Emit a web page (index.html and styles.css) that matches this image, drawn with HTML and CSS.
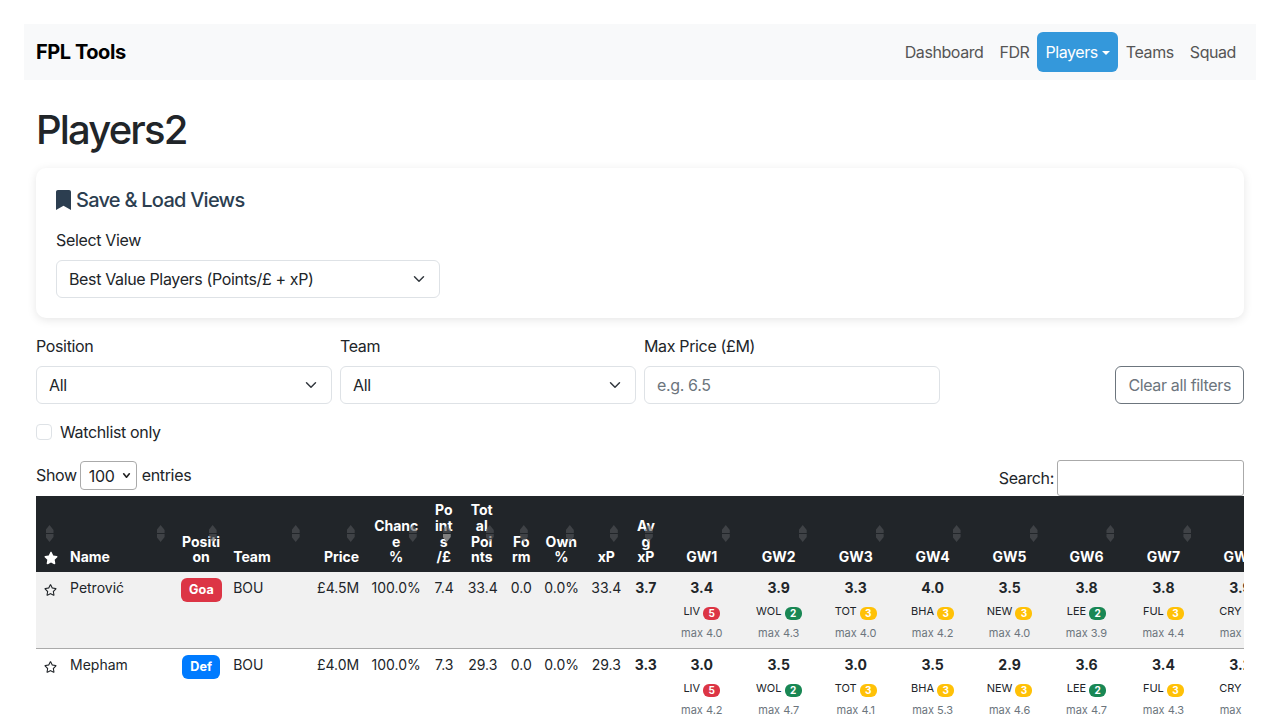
FILE: index.html
```html
<!DOCTYPE html>
<html lang="en">
<head>
    <meta charset="UTF-8">
    <meta name="viewport" content="width=device-width, initial-scale=1.0">
    <title>Players2</title>
    <link rel="stylesheet" href="styles.css">
</head>
<body>
    <nav class="navbar">
        <a class="brand" href="#">FPL Tools</a>
        <ul class="nav-links">
            <li><a href="#">Dashboard</a></li>
            <li><a href="#">FDR</a></li>
            <li><a class="active" href="#">Players<span class="caret"></span></a></li>
            <li><a href="#">Teams</a></li>
            <li><a href="#">Squad</a></li>
        </ul>
    </nav>

    <main class="container">
        <h1>Players2</h1>

        <section class="card">
            <h2>
                <svg class="bookmark" viewBox="0 0 384 512"><path d="M0 512V48C0 21.49 21.49 0 48 0h288c26.51 0 48 21.49 48 48v464L192 400 0 512z"/></svg>
                Save &amp; Load Views
            </h2>
            <label class="field-label">Select View</label>
            <select class="form-select view-select">
                <option>Best Value Players (Points/£ + xP)</option>
            </select>
        </section>

        <div class="filters">
            <div class="filter">
                <label class="field-label">Position</label>
                <select class="form-select"><option>All</option></select>
            </div>
            <div class="filter">
                <label class="field-label">Team</label>
                <select class="form-select"><option>All</option></select>
            </div>
            <div class="filter">
                <label class="field-label">Max Price (£M)</label>
                <input class="form-input" type="text" placeholder="e.g. 6.5">
            </div>
            <button class="clear-btn">Clear all filters</button>
        </div>

        <label class="watchlist"><input type="checkbox"> Watchlist only</label>

        <div class="table-controls">
            <label class="length">Show <select class="length-select"><option>100</option></select> entries</label>
            <label class="search">Search: <input type="search"></label>
        </div>

        <div class="table-wrap">
            <table class="players">
                <colgroup>
                    <col class="c-star"><col class="c-name"><col class="c-pos"><col class="c-team"><col class="c-price">
                    <col class="c-chance"><col class="c-ppp"><col class="c-total"><col class="c-form"><col class="c-own">
                    <col class="c-xp"><col class="c-avg">
                    <col class="c-gw"><col class="c-gw"><col class="c-gw"><col class="c-gw">
                    <col class="c-gw"><col class="c-gw"><col class="c-gw"><col class="c-gw">
                </colgroup>
                <thead>
                    <tr>
                        <th><svg class="star" viewBox="0 0 576 512"><path fill="#fff" d="M259.3 17.8L194 150.2 47.9 171.5c-26.2 3.8-36.7 36.1-17.7 54.6l105.7 103-25 145.5c-4.5 26.3 23.2 46 46.4 33.7L288 439.6l130.7 68.7c23.2 12.2 50.9-7.4 46.4-33.7l-25-145.5 105.7-103c19-18.5 8.5-50.8-17.7-54.6L382 150.2 316.7 17.8c-11.7-23.6-45.6-23.9-57.4 0z"/></svg></th>
                        <th class="left">Name</th>
                        <th>Position</th>
                        <th class="left">Team</th>
                        <th class="right">Price</th>
                        <th>Chance<br>%</th>
                        <th class="sorted tight-points">Points<br>/£</th>
                        <th class="tight-total">Total<br>Points</th>
                        <th>Form</th>
                        <th>Own<br>%</th>
                        <th>xP</th>
                        <th>Avg<br>xP</th>
                        <th>GW1</th><th>GW2</th><th>GW3</th><th>GW4</th>
                        <th>GW5</th><th>GW6</th><th>GW7</th><th>GW8</th>
                    </tr>
                </thead>
                <tbody>
                    <tr class="odd">
                        <td><svg class="star" viewBox="0 0 576 512"><path d="M528.1 171.5L382 150.2 316.7 17.8c-11.7-23.6-45.6-23.9-57.4 0L194 150.2 47.9 171.5c-26.2 3.8-36.7 36.1-17.7 54.6l105.7 103-25 145.5c-4.5 26.3 23.2 46 46.4 33.7L288 439.6l130.7 68.7c23.2 12.2 50.9-7.4 46.4-33.7l-25-145.5 105.7-103c19-18.5 8.5-50.8-17.7-54.6zM388.6 312.3l23.7 138.4L288 385.4l-124.3 65.3 23.7-138.4-100.6-98 139-20.2 62.2-126 62.2 126 139 20.2-100.6 98z"/></svg></td>
                        <td class="left">Petrović</td>
                        <td><span class="pos pos-goa">Goa</span></td>
                        <td class="left">BOU</td>
                        <td class="right">£4.5M</td>
                        <td>100.0%</td><td>7.4</td><td>33.4</td><td>0.0</td><td>0.0%</td><td>33.4</td><td><b>3.7</b></td>
                        <td><div class="gw-xp">3.4</div><div class="gw-fix">LIV <span class="fdr fdr-5">5</span></div><div class="gw-max">max 4.0</div></td>
                        <td><div class="gw-xp">3.9</div><div class="gw-fix">WOL <span class="fdr fdr-2">2</span></div><div class="gw-max">max 4.3</div></td>
                        <td><div class="gw-xp">3.3</div><div class="gw-fix">TOT <span class="fdr fdr-3">3</span></div><div class="gw-max">max 4.0</div></td>
                        <td><div class="gw-xp">4.0</div><div class="gw-fix">BHA <span class="fdr fdr-3">3</span></div><div class="gw-max">max 4.2</div></td>
                        <td><div class="gw-xp">3.5</div><div class="gw-fix">NEW <span class="fdr fdr-3">3</span></div><div class="gw-max">max 4.0</div></td>
                        <td><div class="gw-xp">3.8</div><div class="gw-fix">LEE <span class="fdr fdr-2">2</span></div><div class="gw-max">max 3.9</div></td>
                        <td><div class="gw-xp">3.8</div><div class="gw-fix">FUL <span class="fdr fdr-3">3</span></div><div class="gw-max">max 4.4</div></td>
                        <td><div class="gw-xp">3.9</div><div class="gw-fix">CRY <span class="fdr fdr-3">3</span></div><div class="gw-max">max 4.5</div></td>
                    </tr>
                    <tr>
                        <td><svg class="star" viewBox="0 0 576 512"><path d="M528.1 171.5L382 150.2 316.7 17.8c-11.7-23.6-45.6-23.9-57.4 0L194 150.2 47.9 171.5c-26.2 3.8-36.7 36.1-17.7 54.6l105.7 103-25 145.5c-4.5 26.3 23.2 46 46.4 33.7L288 439.6l130.7 68.7c23.2 12.2 50.9-7.4 46.4-33.7l-25-145.5 105.7-103c19-18.5 8.5-50.8-17.7-54.6zM388.6 312.3l23.7 138.4L288 385.4l-124.3 65.3 23.7-138.4-100.6-98 139-20.2 62.2-126 62.2 126 139 20.2-100.6 98z"/></svg></td>
                        <td class="left">Mepham</td>
                        <td><span class="pos pos-def">Def</span></td>
                        <td class="left">BOU</td>
                        <td class="right">£4.0M</td>
                        <td>100.0%</td><td>7.3</td><td>29.3</td><td>0.0</td><td>0.0%</td><td>29.3</td><td><b>3.3</b></td>
                        <td><div class="gw-xp">3.0</div><div class="gw-fix">LIV <span class="fdr fdr-5">5</span></div><div class="gw-max">max 4.2</div></td>
                        <td><div class="gw-xp">3.5</div><div class="gw-fix">WOL <span class="fdr fdr-2">2</span></div><div class="gw-max">max 4.7</div></td>
                        <td><div class="gw-xp">3.0</div><div class="gw-fix">TOT <span class="fdr fdr-3">3</span></div><div class="gw-max">max 4.1</div></td>
                        <td><div class="gw-xp">3.5</div><div class="gw-fix">BHA <span class="fdr fdr-3">3</span></div><div class="gw-max">max 5.3</div></td>
                        <td><div class="gw-xp">2.9</div><div class="gw-fix">NEW <span class="fdr fdr-3">3</span></div><div class="gw-max">max 4.6</div></td>
                        <td><div class="gw-xp">3.6</div><div class="gw-fix">LEE <span class="fdr fdr-2">2</span></div><div class="gw-max">max 4.7</div></td>
                        <td><div class="gw-xp">3.4</div><div class="gw-fix">FUL <span class="fdr fdr-3">3</span></div><div class="gw-max">max 4.3</div></td>
                        <td><div class="gw-xp">3.2</div><div class="gw-fix">CRY <span class="fdr fdr-3">3</span></div><div class="gw-max">max 4.0</div></td>
                    </tr>
                </tbody>
            </table>
        </div>
    </main>
</body>
</html>
```

FILE: styles.css
```css
* {
    box-sizing: border-box;
}

html, body {
    height: 100%;
    overflow: hidden;
}

body {
    margin: 0;
    padding: 24px 24px 0;
    background-color: #fff;
    color: #212529;
    font-family: Inter, "Liberation Sans", sans-serif;
    font-size: 16px;
    line-height: 24px;
    letter-spacing: -0.35px;
}

select, input, button {
    letter-spacing: inherit;
}

.navbar {
    display: flex;
    justify-content: space-between;
    align-items: center;
    height: 56px;
    padding: 0 12px;
    background-color: #f8f9fa;
}

.brand {
    color: #000;
    font-size: 20px;
    font-weight: 700;
    letter-spacing: -0.45px;
    text-decoration: none;
}

.nav-links {
    display: flex;
    list-style: none;
    margin: 0;
    padding: 0;
    letter-spacing: -0.42px;
}

.nav-links a {
    display: block;
    padding: 8px;
    border-radius: 6px;
    color: #555;
    text-decoration: none;
}

.nav-links a.active {
    background-color: #3498db;
    color: #fff;
}

.caret {
    display: inline-block;
    margin-left: 4px;
    vertical-align: 3px;
    border-top: 4.8px solid #fff;
    border-left: 4.8px solid transparent;
    border-right: 4.8px solid transparent;
}

.container {
    padding: 0 12px;
}

h1 {
    margin: 24px 0 12px;
    font-size: 40px;
    font-weight: 500;
    letter-spacing: -1.85px;
    line-height: 52px;
}

.card {
    height: 150px;
    padding: 20px;
    border-radius: 10px;
    box-shadow: 0 2px 10px rgba(0, 0, 0, 0.1);
}

.card h2 {
    display: flex;
    align-items: center;
    gap: 5px;
    margin: 0 0 16px;
    color: #2c3e50;
    font-size: 20px;
    font-weight: 500;
    letter-spacing: -0.75px;
    line-height: 24px;
}

.bookmark {
    width: 15px;
    height: 20px;
    fill: #2c3e50;
}

.field-label {
    display: block;
    margin-bottom: 8px;
}

.form-select, .form-input {
    display: block;
    width: 100%;
    height: 38px;
    padding: 6px 12px;
    background-color: #fff;
    border: 1px solid #dee2e6;
    border-radius: 6px;
    color: #212529;
    font-family: inherit;
    font-size: 16px;
}

.form-select {
    appearance: none;
    padding-right: 36px;
    background-image: url("data:image/svg+xml,%3csvg xmlns='http://www.w3.org/2000/svg' viewBox='0 0 16 16'%3e%3cpath fill='none' stroke='%23343a40' stroke-linecap='round' stroke-linejoin='round' stroke-width='2' d='m2 5 6 6 6-6'/%3e%3c/svg%3e");
    background-repeat: no-repeat;
    background-position: right 12px center;
    background-size: 16px 12px;
}

.form-input::placeholder {
    color: #6c757d;
}

.view-select {
    width: 384px;
}

.filters {
    display: flex;
    align-items: flex-end;
    gap: 8px;
    margin-top: 16px;
}

.filter {
    width: 296px;
}

.clear-btn {
    height: 38px;
    margin-left: auto;
    padding: 6px 12px;
    background-color: #fff;
    border: 1px solid #6c757d;
    border-radius: 6px;
    color: #6c757d;
    font-family: inherit;
    font-size: 16px;
}

.watchlist {
    display: flex;
    align-items: center;
    gap: 8px;
    margin-top: 16px;
}

.watchlist input {
    appearance: none;
    width: 16px;
    height: 16px;
    margin: 0;
    background-color: #fff;
    border: 1px solid #dee2e6;
    border-radius: 4px;
}

.table-controls {
    display: flex;
    justify-content: space-between;
    height: 36px;
    margin-top: 16px;
}

.length {
    display: flex;
    align-items: flex-start;
    gap: 4px;
    height: 29px;
    margin-top: 1px;
    line-height: 29px;
}

.length-select {
    appearance: none;
    width: 57px;
    height: 29px;
    margin-left: -1px;
    margin-right: 1px;
    padding: 0 0 0 8px;
    background-color: #fff;
    background-image: url("data:image/svg+xml,%3csvg xmlns='http://www.w3.org/2000/svg' viewBox='0 0 16 16'%3e%3cpath fill='none' stroke='%23222' stroke-linecap='round' stroke-linejoin='round' stroke-width='3' d='m3 5 5 6 5-6'/%3e%3c/svg%3e");
    background-repeat: no-repeat;
    background-position: right 5px center;
    background-size: 9px 9px;
    border: 1px solid #aaa;
    border-radius: 4px;
    color: #212529;
    font-family: inherit;
    font-size: 16px;
}

.search {
    display: flex;
    align-items: center;
    gap: 3px;
}

.search input {
    width: 187px;
    height: 36px;
    padding: 0 4px;
    background-color: #fff;
    border: 1px solid #aaa;
    border-radius: 3px;
    outline: none;
    appearance: none;
}

.table-wrap {
    overflow: hidden;
}

.players {
    table-layout: fixed;
    width: 1241px;
    border-collapse: collapse;
    font-size: 14px;
    letter-spacing: 0;
    line-height: 16px;
    text-align: center;
}

.c-star { width: 26px; }
.c-name { width: 111px; }
.c-pos { width: 52px; }
.c-team { width: 83px; }
.c-price { width: 55px; }
.c-chance { width: 62px; }
.c-ppp { width: 34px; }
.c-total { width: 43px; }
.c-form { width: 34px; }
.c-own { width: 46px; }
.c-xp { width: 44px; }
.c-avg { width: 35px; }
.c-gw { width: 76.9px; }

.players th {
    position: relative;
    padding: 6px 4px 7px 8px;
    background-color: #212529;
    color: #fff;
    font-weight: 700;
    line-height: 15.75px;
    vertical-align: bottom;
    overflow-wrap: anywhere;
}

.players th.tight-points {
    padding-left: 9px;
    padding-right: 6px;
}

.players th.tight-total {
    padding-left: 8px;
    padding-right: 6px;
}

/* sort arrows sit on top of the header text */
.players th::before, .players th::after {
    content: "";
    position: absolute;
    right: 8.5px;
    width: 8px;
    height: 8px;
    background-color: rgba(83, 86, 90, 0.6);
}

.players th::before {
    top: 29px;
    clip-path: polygon(50% 0, 100% 62%, 100% 100%, 0 100%, 0 62%);
}

.players th::after {
    top: 38px;
    clip-path: polygon(0 0, 100% 0, 100% 38%, 50% 100%, 0 38%);
}

.players th.sorted::after {
    background-color: #808080;
}

.players td {
    padding: 8px 4px 7px 8px;
    border-bottom: 1px solid #aaa;
    color: #212529;
    vertical-align: top;
}

.players tr.odd td {
    background-color: #f1f1f1;
}

.players .left {
    text-align: left;
}

.players .right {
    text-align: right;
}

.star {
    display: block;
    width: 13px;
    height: 12px;
    margin-top: 4px;
    fill: #212529;
}

.players th .star {
    width: 14px;
    height: 14px;
    margin-top: 0;
}

.pos {
    display: inline-block;
    margin-top: -2px;
    padding: 3px 8px;
    border-radius: 6px;
    color: #fff;
    font-size: 12.6px;
    font-weight: 700;
    line-height: 18px;
}

.pos-goa {
    background-color: #dc3545;
}

.pos-def {
    background-color: #007bff;
}

.gw-xp {
    margin-bottom: 7px;
    font-weight: 700;
}

.gw-fix {
    margin-bottom: 5px;
    font-size: 11px;
    line-height: 16px;
    white-space: nowrap;
}

.gw-max {
    color: #6c757d;
    font-size: 11px;
    line-height: 16px;
    white-space: nowrap;
}

.fdr {
    display: inline-block;
    min-width: 17px;
    padding: 0 4px;
    border-radius: 6px;
    color: #fff;
    font-size: 10px;
    font-weight: 700;
    line-height: 13px;
    text-align: center;
    vertical-align: -2px;
}

.fdr-2 {
    background-color: #198754;
}

.fdr-3 {
    background-color: #ffc107;
}

.fdr-5 {
    background-color: #dc3545;
}
```
